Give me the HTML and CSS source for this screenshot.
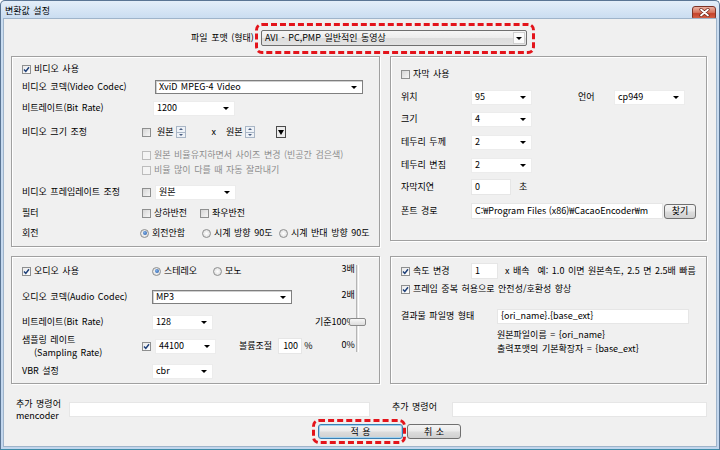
FILE: index.html
```html
<!DOCTYPE html>
<html lang="ko">

<head>
  <meta charset="UTF-8">
  <meta name="viewport" content="width=device-width, initial-scale=1.0">
  <title>변환값 설정</title>
  <link rel="stylesheet" href="styles.css">
</head>

<body>
  <div class="window">
    <div class="titlebar">
      <span class="title">변환값 설정</span>
      <span class="close">
        <svg width="11" height="9" viewBox="0 0 11 9">
          <path d="M2 1.5 L9 7.5 M9 1.5 L2 7.5" stroke="#6b2318" stroke-width="3.2" stroke-linecap="round" />
          <path d="M2 1.5 L9 7.5 M9 1.5 L2 7.5" stroke="#fff" stroke-width="1.8" stroke-linecap="round" />
        </svg>
      </span>
    </div>

    <div class="client">
      <!-- 파일 포맷 -->
      <div class="format-row">
        <span class="format-label">파일 포맷 (형태)</span>
        <div class="format-wrap">
          <div class="format-select">
            <span>AVI - PC,PMP 일반적인 동영상</span>
            <span class="fs-btn"><i class="arr"></i></span>
          </div>
          <div class="mark mark-format"></div>
        </div>
      </div>

      <div class="panels">
        <!-- 비디오 -->
        <div class="group video">
          <div class="row">
            <span class="cb on"><svg width="7" height="7" viewBox="0 0 7 7"><path d="M1 3.4 L2.8 5.4 L6 1.2" stroke="#1d3f78" stroke-width="1.5" fill="none" /></svg></span>비디오 사용
          </div>
          <div class="row">
            <span class="lbl">비디오 코덱(Video Codec)</span>
            <div class="combo codec">XviD MPEG-4 Video<i class="arr"></i></div>
          </div>
          <div class="row">
            <span class="lbl">비트레이트(Bit Rate)</span>
            <div class="ecombo vbit">1200<i class="arr"></i></div>
          </div>
          <div class="row">
            <span class="lbl">비디오 크기 조정</span>
            <span class="cb"></span>
            <div class="spin s1">원본<span class="ud"><i class="up"></i><i class="dn"></i></span></div>
            <span class="times">x</span>
            <div class="spin s2">원본<span class="ud"><i class="up"></i><i class="dn"></i></span></div>
            <span class="ddbtn"><i></i></span>
          </div>
          <div class="row dis">
            <span class="lbl"></span>
            <span class="cb off"></span>원본 비율유지하면서 사이즈 변경 (빈공간 검은색)
          </div>
          <div class="row dis">
            <span class="lbl"></span>
            <span class="cb off"></span>비율 많이 다를 때 자동 잘라내기
          </div>
          <div class="row">
            <span class="lbl">비디오 프레임레이트 조정</span>
            <span class="cb"></span>
            <div class="ecombo vfps">원본<i class="arr"></i></div>
          </div>
          <div class="row">
            <span class="lbl">필터</span>
            <span class="opt w58"><span class="cb"></span>상하반전</span>
            <span class="opt"><span class="cb"></span>좌우반전</span>
          </div>
          <div class="row">
            <span class="lbl">회전</span>
            <span class="opt rot1"><span class="rb on"></span>회전안함</span>
            <span class="opt rot2"><span class="rb"></span>시계 방향 90도</span>
            <span class="opt"><span class="rb"></span>시계 반대 방향 90도</span>
          </div>
        </div>

        <!-- 자막 -->
        <div class="group subs">
          <div class="row">
            <span class="cb"></span>자막 사용
          </div>
          <div class="row">
            <span class="lbl s">위치</span>
            <div class="ecombo w61">95<i class="arr"></i></div>
            <span class="lang">언어</span>
            <div class="ecombo w71">cp949<i class="arr"></i></div>
          </div>
          <div class="row">
            <span class="lbl s">크기</span>
            <div class="ecombo w61">4<i class="arr"></i></div>
          </div>
          <div class="row">
            <span class="lbl s">테두리 두께</span>
            <div class="ecombo w61">2<i class="arr"></i></div>
          </div>
          <div class="row">
            <span class="lbl s">테두리 변짐</span>
            <div class="ecombo w61">2<i class="arr"></i></div>
          </div>
          <div class="row">
            <span class="lbl s">자막지연</span>
            <div class="field delay">0</div>
            <span class="sec">초</span>
          </div>
          <div class="row">
            <span class="lbl s">폰트 경로</span>
            <div class="field fontpath">C:₩Program Files (x86)₩CacaoEncoder₩m</div>
            <div class="btn find">찾기</div>
          </div>
        </div>
      </div>

      <div class="panels bottom">
        <!-- 오디오 -->
        <div class="group audio">
          <div class="audio-rows">
            <div class="row">
              <span class="lbl"><span class="cb on"><svg width="7" height="7" viewBox="0 0 7 7"><path d="M1 3.4 L2.8 5.4 L6 1.2" stroke="#1d3f78" stroke-width="1.5" fill="none" /></svg></span>오디오 사용</span>
              <span class="opt stereo"><span class="rb on"></span>스테레오</span>
              <span class="opt"><span class="rb"></span>모노</span>
            </div>
            <div class="row">
              <span class="lbl">오디오 코덱(Audio Codec)</span>
              <div class="combo mp3">MP3<i class="arr"></i></div>
            </div>
            <div class="row">
              <span class="lbl">비트레이트(Bit Rate)</span>
              <div class="ecombo w61 ml10">128<i class="arr"></i></div>
            </div>
            <div class="row">
              <span class="lbl two">샘플링 레이트<br><span class="sub">(Sampling Rate)</span></span>
              <span class="cb on"><svg width="7" height="7" viewBox="0 0 7 7"><path d="M1 3.4 L2.8 5.4 L6 1.2" stroke="#1d3f78" stroke-width="1.5" fill="none" /></svg></span>
              <div class="ecombo w61 ml1">44100<i class="arr"></i></div>
              <span class="vol">볼륨조절</span>
              <div class="field volume">100</div>
              <span class="pct">%</span>
            </div>
            <div class="row">
              <span class="lbl">VBR 설정</span>
              <div class="ecombo w61 ml10">cbr<i class="arr"></i></div>
            </div>
          </div>
          <div class="slider">
            <div class="slider-labels">
              <span>3배</span>
              <span>2배</span>
              <span>기준100%</span>
              <span>0%</span>
            </div>
            <div class="track-wrap">
              <div class="track"></div>
              <div class="thumb"></div>
            </div>
          </div>
        </div>

        <!-- 속도 -->
        <div class="group speed">
          <div class="row">
            <span class="lbl s"><span class="cb on"><svg width="7" height="7" viewBox="0 0 7 7"><path d="M1 3.4 L2.8 5.4 L6 1.2" stroke="#1d3f78" stroke-width="1.5" fill="none" /></svg></span>속도 변경</span>
            <div class="field rate">1</div>
            <span class="mult">x 배속</span>
            <span class="hint">예: 1.0 이면 원본속도, 2.5 면 2.5배 빠름</span>
          </div>
          <div class="row">
            <span class="cb on"><svg width="7" height="7" viewBox="0 0 7 7"><path d="M1 3.4 L2.8 5.4 L6 1.2" stroke="#1d3f78" stroke-width="1.5" fill="none" /></svg></span>프레임 중복 허용으로 안전성/호환성 향상
          </div>
          <div class="row">
            <span class="lbl w96">결과물 파일명 형태</span>
            <div class="field outname">{ori_name}.{base_ext}</div>
          </div>
          <div class="row note">원본파일이름 = {ori_name}</div>
          <div class="row note">출력포맷의 기본확장자 = {base_ext}</div>
        </div>
      </div>

      <!-- 추가 명령어 -->
      <div class="panels extra">
        <div class="extra-cell left">
          <span class="extra-lbl">추가 명령어<br>mencoder</span>
          <div class="field cmd-l"></div>
        </div>
        <div class="extra-cell right">
          <span class="extra-lbl r">추가 명령어</span>
          <div class="field cmd-r"></div>
        </div>
      </div>

      <div class="buttons">
        <div class="ok-wrap">
          <div class="btn ok">적 용</div>
          <div class="mark mark-ok"></div>
        </div>
        <div class="btn cancel">취 소</div>
      </div>
    </div>
  </div>
</body>

</html>
```

FILE: styles.css
```css
* {
  margin: 0;
  padding: 0;
  box-sizing: border-box;
}

body {
  width: 720px;
  height: 450px;
  overflow: hidden;
  font: 9px/12px "Noto Sans CJK KR", "Liberation Sans", sans-serif;
  word-spacing: 1px;
  color: #000;
  background: #fff;
}

/* 창 틀 */
.window {
  width: 720px;
  height: 450px;
  border: 1px solid #5a7594;
  border-bottom-color: #3f8ca8;
  border-radius: 5px 5px 0 0;
  background: linear-gradient(#e4eef9, #c9dcf0 18px, #c2d6ed);
  padding: 0 3px 3px;
  display: flex;
  flex-direction: column;
}

.titlebar {
  height: 18px;
  display: flex;
  align-items: center;
  justify-content: space-between;
  padding-left: 1px;
}

.title {
  margin-top: 2px;
}

.close {
  width: 24px;
  height: 14px;
  margin-top: 5px;
  border: 1px solid #7d3326;
  border-radius: 3px;
  background: linear-gradient(#eab1a2, #d8755e 45%, #c5432b 55%, #d6654a);
  display: flex;
  align-items: center;
  justify-content: center;
}

.client {
  flex: 1;
  background: #f0f0f0;
  box-shadow: 0 0 0 1px #9fb4ca;
  padding: 0 9px 0 7px;
}

/* 파일 포맷 */
.format-row {
  height: 37px;
  display: flex;
  align-items: center;
  justify-content: center;
  padding-top: 1px;
}

.format-label {
  margin-right: 7px;
}

.format-wrap {
  position: relative;
}

.format-select {
  width: 266px;
  height: 16px;
  border: 1px solid #6f6f6f;
  border-radius: 2px;
  background: linear-gradient(#f6f6f6, #ececec 50%, #dcdcdc 50%, #e2e2e2);
  display: flex;
  align-items: center;
  padding-left: 3px;
}

.fs-btn {
  width: 12px;
  height: 12px;
  margin: 0 1px 0 auto;
  background: #fbfbfb;
  border: 1px solid #cfcfcf;
  display: flex;
  align-items: center;
  justify-content: center;
}

.fs-btn .arr {
  margin: 0;
}

/* 빨간 점선 표시 */
.mark {
  position: absolute;
  border: 3px dashed #e3141b;
  border-radius: 7px;
}

.mark-format {
  left: -6px;
  right: -8px;
  top: -7px;
  bottom: -8px;
}

.mark-ok {
  left: -6px;
  right: -3px;
  top: -5px;
  bottom: -5px;
}

/* 그룹 박스 */
.panels {
  display: grid;
  grid-template-columns: 369px 317px;
  column-gap: 10px;
  align-items: start;
}

.group {
  border: 1px solid #a0a0a0;
  box-shadow: inset 1px 1px #fff, 1px 1px #fff;
}

.row {
  height: 16px;
  display: flex;
  align-items: center;
  white-space: nowrap;
}

.lbl {
  width: 120px;
  flex: none;
  display: flex;
  align-items: center;
}

.lbl.s {
  width: 69px;
}

.lbl.w96 {
  width: 96px;
}

.video {
  height: 191px;
  padding: 4px 0 0 10px;
  display: grid;
  grid-template-rows: 18px 21px 24px 23px 15px 22px 21px 20px 16px;
}

.subs {
  height: 185px;
  padding: 9px 0 0 10px;
  display: grid;
  grid-template-rows: 23px 22px 23px 23px 22px 24px 16px;
}

.bottom {
  margin-top: 9px;
}

.audio {
  height: 128px;
  display: flex;
}

.audio-rows {
  width: 303px;
  padding: 6px 0 0 10px;
  display: grid;
  grid-template-rows: 26px 25px 24px 25px 16px;
}

.speed {
  height: 128px;
  padding: 6px 0 0 10px;
  display: grid;
  grid-template-rows: 18px 27px 19px 14px 16px;
}

/* 체크박스, 라디오 */
.cb {
  width: 9px;
  height: 9px;
  flex: none;
  margin-right: 3px;
  border: 1px solid #8e8f8f;
  background: linear-gradient(135deg, #d6d6d6, #f6f6f6);
  display: flex;
  align-items: center;
  justify-content: center;
}

.cb.on {
  background: linear-gradient(135deg, #e9e9e9, #fff);
}

.cb.off {
  border-color: #bcbcbc;
  background: #f4f4f4;
}

.rb {
  width: 9px;
  height: 9px;
  flex: none;
  margin-right: 3px;
  border: 1px solid #8e8f8f;
  border-radius: 50%;
  background: radial-gradient(#fff, #d6d6d6);
  display: flex;
  align-items: center;
  justify-content: center;
}

.rb.on::after {
  content: '';
  width: 4px;
  height: 4px;
  border-radius: 50%;
  background: radial-gradient(circle at 40% 40%, #7fb2ea, #1f4f9c);
}

.opt {
  display: flex;
  align-items: center;
}

.dis {
  color: #8d8d8d;
}

/* 콤보, 입력칸 */
.arr {
  width: 0;
  height: 0;
  margin: 0 5px 0 auto;
  border-left: 3px solid transparent;
  border-right: 3px solid transparent;
  border-top: 3px solid #000;
}

.combo {
  height: 14px;
  display: flex;
  align-items: center;
  padding-left: 3px;
  background: #fff;
  border: 1px solid #7f7f7f;
  box-shadow: inset 1px 1px #cfcfcf;
}

.ecombo {
  height: 15px;
  display: flex;
  align-items: center;
  padding-left: 3px;
  background: #fff;
  border: 1px solid #ececec;
}

.field {
  height: 16px;
  display: flex;
  align-items: center;
  padding-left: 3px;
  background: #fff;
  border: 1px solid #e6e6e6;
  overflow: hidden;
}

.codec {
  width: 208px;
  margin-left: 13px;
}

.vbit {
  width: 82px;
  margin-left: 11px;
}

.vfps {
  width: 81px;
  margin-left: 1px;
}

.w61 {
  width: 61px;
  margin-left: 1px;
}

.w71 {
  width: 71px;
}

.ml10 {
  margin-left: 10px;
}

.ml1 {
  margin-left: 1px;
}

.mp3 {
  width: 140px;
  margin-left: 10px;
}

/* 스핀 */
.spin {
  display: flex;
  align-items: center;
  padding-left: 2px;
}

.s1 {
  margin-left: 1px;
}

.s2 {
  margin-left: 8px;
}

.ud {
  width: 10px;
  height: 12px;
  margin-left: 2px;
  border: 1px solid #a9b6c6;
  background: #eef2f7;
  display: flex;
  flex-direction: column;
}

.ud i {
  flex: 1;
  display: flex;
  align-items: center;
  justify-content: center;
}

.ud i + i {
  border-top: 1px solid #a9b6c6;
}

.ud .up::after {
  content: '';
  border-left: 2px solid transparent;
  border-right: 2px solid transparent;
  border-bottom: 2px solid #4a5e82;
}

.ud .dn::after {
  content: '';
  border-left: 2px solid transparent;
  border-right: 2px solid transparent;
  border-top: 2px solid #4a5e82;
}

.times {
  margin-left: 26px;
}

.ddbtn {
  width: 10px;
  height: 12px;
  margin-left: 21px;
  border: 1px solid #4a4a4a;
  background: #ececec;
  display: flex;
  align-items: center;
  justify-content: center;
}

.ddbtn i {
  border-left: 3px solid transparent;
  border-right: 3px solid transparent;
  border-top: 5px solid #000;
}

.w58 {
  width: 58px;
}

.rot1 {
  margin-left: -2px;
  width: 62px;
}

.rot2 {
  width: 77px;
}

/* 자막 */
.lang {
  margin-left: 46px;
  width: 36px;
}

.delay {
  width: 40px;
  margin-left: 1px;
}

.sec {
  margin-left: 8px;
}

.fontpath {
  width: 192px;
  margin-left: 1px;
  white-space: nowrap;
  word-spacing: 0;
}

.btn {
  height: 15px;
  border: 1px solid #707070;
  border-radius: 3px;
  background: linear-gradient(#f4f4f4, #ebebeb 45%, #dcdcdc 55%, #d0d0d0);
  display: flex;
  align-items: center;
  justify-content: center;
}

.find {
  width: 32px;
  margin-left: 1px;
}

/* 오디오 */
.stereo {
  margin-left: 10px;
  width: 61px;
}

.two {
  display: block;
  line-height: 13px;
  margin-top: -1px;
}

.two .sub {
  padding-left: 12px;
}

.vol {
  margin-left: 23px;
}

.volume {
  width: 24px;
  margin-left: 6px;
  justify-content: flex-end;
  padding-right: 3px;
}

.pct {
  margin-left: 2px;
}

.slider {
  display: flex;
  padding-top: 4px;
}

.slider-labels {
  width: 30px;
  display: grid;
  grid-template-rows: 26px 27px 23px 16px;
  text-align: right;
  line-height: 16px;
  word-spacing: 0;
  white-space: nowrap;
}

.track-wrap {
  position: relative;
  width: 24px;
}

.track {
  width: 3px;
  height: 87px;
  margin: 4px 0 0 11px;
  border-left: 1px solid #b4b4b4;
  border-right: 1px solid #fff;
  background: #e4e4e4;
}

.thumb {
  position: absolute;
  left: 4px;
  top: 57px;
  width: 17px;
  height: 8px;
  border: 1px solid #8a8a8a;
  border-radius: 2px;
  background: linear-gradient(#f8f8f8, #dcdcdc);
}

/* 속도 */
.rate {
  width: 27px;
  margin-left: 1px;
}

.mult {
  margin-left: 7px;
}

.hint {
  margin-left: 8px;
}

.outname {
  width: 192px;
  height: 15px;
}

.note {
  padding-left: 96px;
}

/* 추가 명령어 */
.extra {
  margin-top: 13px;
  height: 22px;
  align-items: center;
}

.extra-cell {
  display: flex;
  align-items: center;
}

.extra-cell.left {
  padding-left: 5px;
}

.extra-cell.right {
  padding-left: 2px;
}

.extra-lbl {
  width: 53px;
  line-height: 12px;
  padding-top: 1px;
}

.extra-lbl.r {
  width: 60px;
  padding: 0 0 5px;
}

.cmd-l {
  width: 301px;
  height: 15px;
}

.cmd-r {
  width: 255px;
  height: 15px;
}

/* 버튼 */
.buttons {
  display: flex;
  margin-top: 5px;
  padding-left: 307px;
}

.ok-wrap {
  position: relative;
}

.ok {
  width: 85px;
  border-color: #3c7fb1;
  box-shadow: inset 0 0 0 1px #9fd3f2;
}

.cancel {
  width: 54px;
  margin-left: 4px;
}
```
